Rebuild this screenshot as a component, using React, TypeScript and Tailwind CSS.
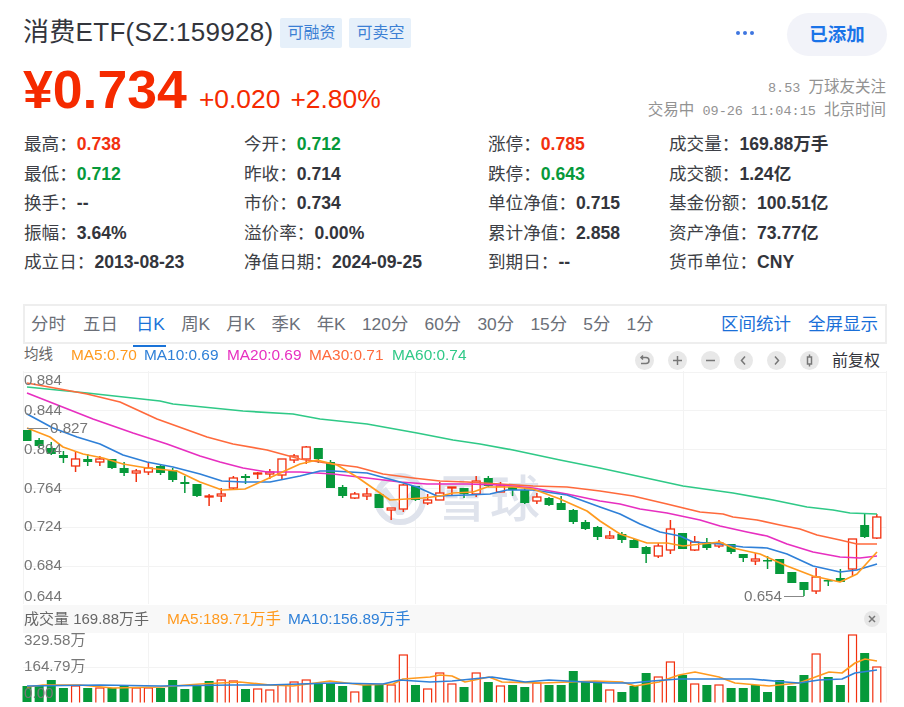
const RED = "#f2300f";
const GREEN = "#06993a";

type Candle = [number, number, number, number, "r" | "g"];

// body top, body bottom, wick top, wick bottom
const candles: Candle[] = [
  [431, 442, 431, 442, "g"], [441, 447, 439, 449, "g"], [449, 455, 443, 456, "g"], [456, 459, 452, 464, "g"],
  [460, 467, 452, 473, "r"], [460, 463, 455, 467, "g"], [460, 463, 457, 467, "r"], [460, 469, 460, 470, "g"],
  [469, 474, 463, 477, "g"], [472, 474, 470, 483, "r"], [469, 473, 463, 476, "r"], [467, 474, 465, 476, "g"],
  [471, 481, 469, 483, "g"], [483, 485, 477, 494, "g"], [485, 497, 485, 498, "g"], [497, 498, 495, 507, "r"],
  [495, 497, 489, 503, "r"], [479, 489, 477, 491, "r"], [477, 479, 475, 485, "g"], [474, 475, 473, 480, "r"],
  [473, 475, 470, 480, "r"], [460, 476, 460, 480, "r"], [457, 461, 455, 464, "r"], [448, 460, 447, 465, "r"],
  [449, 460, 449, 464, "g"], [463, 489, 461, 489, "g"], [488, 497, 486, 499, "g"], [495, 499, 493, 500, "r"],
  [495, 497, 489, 501, "r"], [495, 509, 495, 509, "g"], [509, 511, 509, 521, "r"], [486, 510, 485, 513, "r"],
  [487, 501, 487, 502, "g"], [501, 504, 495, 506, "r"], [494, 501, 483, 501, "r"], [488, 489, 488, 497, "r"],
  [489, 495, 489, 499, "g"], [482, 495, 477, 498, "r"], [479, 487, 477, 488, "g"], [487, 493, 483, 493, "r"],
  [488, 491, 487, 497, "g"], [491, 504, 489, 505, "g"], [498, 502, 494, 505, "r"], [499, 506, 498, 507, "g"],
  [504, 511, 497, 511, "g"], [511, 523, 510, 525, "g"], [523, 530, 521, 531, "g"], [528, 538, 527, 541, "g"],
  [537, 539, 532, 540, "r"], [535, 541, 533, 544, "g"], [541, 549, 540, 549, "g"], [548, 555, 547, 564, "g"],
  [547, 557, 544, 559, "r"], [530, 551, 521, 555, "r"], [534, 550, 534, 550, "g"], [543, 551, 537, 552, "r"],
  [543, 549, 539, 551, "g"], [544, 547, 541, 549, "r"], [545, 553, 545, 555, "g"], [555, 559, 555, 563, "g"],
  [560, 562, 554, 566, "r"], [561, 562, 557, 570, "g"], [560, 575, 560, 575, "g"], [573, 584, 573, 584, "g"],
  [583, 591, 583, 597, "g"], [578, 592, 569, 595, "r"], [581, 582, 580, 587, "g"], [579, 583, 570, 583, "g"],
  [540, 570, 540, 577, "r"], [526, 538, 515, 539, "g"], [518, 539, 515, 540, "r"],
];

const volumes: [number, "r" | "g"][] = [
  [686, "g"], [686, "g"], [680, "g"], [688, "g"], [686, "r"], [688, "g"], [688, "r"], [688, "g"], [685, "g"],
  [688, "r"], [688, "r"], [688, "g"], [680, "g"], [689, "g"], [686, "g"], [681, "g"], [680, "r"], [681, "r"],
  [689, "g"], [689, "r"], [690, "r"], [685, "r"], [682, "r"], [680, "r"], [683, "g"], [683, "g"], [686, "g"],
  [692, "r"], [685, "g"], [685, "g"], [685, "r"], [655, "r"], [685, "g"], [689, "r"], [673, "r"], [684, "r"],
  [687, "g"], [673, "r"], [682, "g"], [686, "r"], [685, "g"], [687, "g"], [683, "r"], [685, "g"], [685, "g"],
  [671, "g"], [681, "g"], [683, "g"], [690, "r"], [692, "g"], [686, "g"], [673, "g"], [677, "r"], [662, "r"],
  [675, "g"], [684, "r"], [685, "g"], [685, "r"], [688, "g"], [688, "g"], [685, "g"], [692, "g"], [680, "g"],
  [686, "g"], [675, "g"], [654, "r"], [677, "g"], [685, "g"], [635, "r"], [653, "g"], [667, "r"],
];

const ma60 = "27,388 87,394 160,402 173,405 243,412 293,415 320,420 367,425 417,434 453,441 480,445 513,451 560,461 600,469 683,487 733,494 773,501 807,508 833,511 850,514 877,515";
const ma30 = "27,384 60,390 87,395 120,403 157,420 207,438 233,445 267,451 300,460 333,465 357,468 383,475 413,479 440,482 467,483 500,485 533,487 567,488 600,492 633,497 667,505 700,513 723,515 733,518 757,521 780,526 800,530 817,536 840,541 857,545 877,545";
const ma20 = "27,394 60,407 93,420 133,434 167,445 200,457 220,463 243,469 267,473 300,473 333,475 367,479 400,483 427,485 467,485 500,486 533,489 567,495 600,502 620,505 640,510 667,514 700,521 720,527 747,533 767,537 787,545 813,553 840,558 860,559 877,557";
const ma10 = "27,415 53,429 77,438 100,445 123,456 147,463 173,468 200,475 222,482 243,483 270,483 300,477 320,472 333,472 367,474 400,483 417,488 437,497 467,496 490,495 507,491 533,491 567,496 600,508 620,515 640,525 660,533 680,537 693,543 720,545 743,548 767,549 787,555 813,567 840,573 857,571 877,565";
const ma5 = "27,429 50,438 63,448 83,455 103,459 123,465 147,469 177,472 200,483 222,491 245,490 267,480 300,465 317,461 337,466 357,478 390,501 423,499 440,497 453,494 473,493 487,488 513,488 533,490 560,500 587,512 600,522 620,535 647,544 667,544 683,547 720,543 733,549 760,555 787,567 813,577 840,583 857,575 877,553";

const volMa5 = "27,687 43,685 80,685 113,688 160,687 200,684 240,682 270,685 293,686 330,681 363,685 393,684 403,679 430,677 440,675 452,676 465,682 489,677 502,682 542,683 569,682 595,681 622,682 635,686 659,682 679,675 695,672 719,677 735,683 769,686 799,683 829,672 842,673 855,663 865,659 877,661";
const volMa10 = "27,686 100,685 160,686 233,685 267,685 333,683 383,684 400,680 430,682 452,681 492,677 525,682 549,680 585,682 609,683 632,683 652,681 679,679 752,679 785,682 799,683 819,680 842,679 855,673 877,670";

const candleX = (i: number) => 27 + i * 12.14;

const stats: [string, string, string?][][] = [
  [["最高：", "0.738", RED], ["今开：", "0.712", GREEN], ["涨停：", "0.785", RED], ["成交量：", "169.88万手"]],
  [["最低：", "0.712", GREEN], ["昨收：", "0.714"], ["跌停：", "0.643", GREEN], ["成交额：", "1.24亿"]],
  [["换手：", "--"], ["市价：", "0.734"], ["单位净值：", "0.715"], ["基金份额：", "100.51亿"]],
  [["振幅：", "3.64%"], ["溢价率：", "0.00%"], ["累计净值：", "2.858"], ["资产净值：", "73.77亿"]],
  [["成立日：", "2013-08-23"], ["净值日期：", "2024-09-25"], ["到期日：", "--"], ["货币单位：", "CNY"]],
];

const tabs = ["分时", "五日", "日K", "周K", "月K", "季K", "年K", "120分", "60分", "30分", "15分", "5分", "1分"];

const legend = [
  ["MA5:0.70", "text-[#ff9a1f]", "w-[73px]"],
  ["MA10:0.69", "text-[#2f80d8]", "w-[83px]"],
  ["MA20:0.69", "text-[#e72fc0]", "w-[82px]"],
  ["MA30:0.71", "text-[#ff6a3c]", "w-[83px]"],
  ["MA60:0.74", "text-[#2fc987]", "w-[83px]"],
];

function ToolIcon({ children }: { children: React.ReactNode }) {
  return (
    <span className="w-[19px] h-[19px] rounded-full bg-[#e8e8e8] flex items-center justify-center">
      <svg width="13" height="13" viewBox="0 0 13 13" fill="none" stroke="#777" strokeWidth="1.5">
        {children}
      </svg>
    </span>
  );
}

function App() {
  return (
    <div className="w-[904px] h-[707px] overflow-hidden bg-white pl-[23px] pr-[17px] pt-[13px] text-[#33353c] font-['Liberation_Sans','Noto_Sans_CJK_SC',sans-serif]">
      <div className="flex items-start h-[43px]">
        <div className="flex items-center h-[39px]">
          <h1 className="text-[26px] leading-[37px] font-normal tracking-[0.3px]">消费ETF(SZ:159928)</h1>
          <span className="ml-[7px] w-[62px] h-[30px] rounded-[2px] bg-[#e6f0fa] text-[#3b7fd4] text-[16px] leading-[30px] text-center">可融资</span>
          <span className="ml-[7px] w-[62px] h-[30px] rounded-[2px] bg-[#e6f0fa] text-[#3b7fd4] text-[16px] leading-[30px] text-center">可卖空</span>
        </div>
        <div className="ml-auto flex items-center h-[43px]">
          <span className="flex gap-[3px] mr-[33px] mb-[3px]">
            <i className="w-[4px] h-[4px] rounded-full bg-[#3f76e0]" />
            <i className="w-[4px] h-[4px] rounded-full bg-[#3f76e0]" />
            <i className="w-[4px] h-[4px] rounded-full bg-[#3f76e0]" />
          </span>
          <button className="w-[100px] h-[43px] rounded-full bg-[#f2f3f9] text-[#1a73e8] text-[18.5px] font-bold">已添加</button>
        </div>
      </div>

      <div className="flex items-start justify-between h-[74px]">
        <div className="flex items-baseline text-[#f52a00] -mt-[2px]">
          <span className="text-[53.6px] leading-[70px] font-bold">¥0.734</span>
          <span className="ml-[12px] text-[26.4px]">+0.020</span>
          <span className="ml-[10px] text-[26.4px]">+2.80%</span>
        </div>
        <div className="text-right text-[15.5px] leading-[22px] text-[#929292] mt-[21px] mr-[1px] font-['Liberation_Mono','Noto_Sans_CJK_SC',monospace]">
          <div><span className="text-[13.5px]">8.53 </span>万球友关注</div>
          <div>交易中<span className="text-[13.5px]"> 09-26 11:04:15 </span>北京时间</div>
        </div>
      </div>

      <div className="text-[17.6px]">
        {stats.map((row, r) => (
          <div key={r} className="grid grid-cols-[220px_244px_181px_218px] h-[29.6px] leading-[29.6px] pl-[1px]">
            {row.map(([label, value, color]) => (
              <div key={label} className="whitespace-nowrap">
                <span className="text-[#3d3f46]">{label}</span>
                <span className="font-bold" style={color ? { color } : undefined}>{value}</span>
              </div>
            ))}
          </div>
        ))}
      </div>

      <div className="mt-[26px] h-[40px] border-2 border-[#eeeeee] flex items-center pl-[6px] pr-[7px] pt-[1px] relative text-[17.4px] text-[#6b6f78]">
        <div className="flex gap-[16.2px]">
          {tabs.map((t) => (
            <span key={t} className={t === "日K" ? "text-[#1a73d8] relative" : t === "分时" ? "mr-[1px]" : t === "五日" ? "mr-[2px]" : ""}>
              {t}
              {t === "日K" && <i className="absolute left-[-3px] right-[-1px] bottom-[-9px] h-[2px] bg-[#1a73d8]" />}
            </span>
          ))}
        </div>
        <div className="ml-auto flex gap-[17px] text-[#1a6fd8] text-[17.5px]">
          <span>区间统计</span>
          <span>全屏显示</span>
        </div>
      </div>

      <div className="flex items-start h-[27px] pl-[1px] text-[15.4px] whitespace-nowrap">
        <div className="flex items-center h-[22px]">
          <span className="w-[47px] text-[14.5px] text-[#666]">均线</span>
          {legend.map(([text, color, width]) => (
            <span key={text} className={`${color} ${width} blur-[0.3px]`}>{text}</span>
          ))}
        </div>
        <div className="ml-auto flex items-center gap-[14px] mr-[7px] mt-[5px]">
          <ToolIcon><path d="M3 3.5h5a3 3 0 0 1 0 6H3M5 1.5 3 3.5l2 2" /></ToolIcon>
          <ToolIcon><path d="M6.5 2v9M2 6.5h9" /></ToolIcon>
          <ToolIcon><path d="M2 6.5h9" /></ToolIcon>
          <ToolIcon><path d="M8 2.5 4.5 6.5 8 10.5" /></ToolIcon>
          <ToolIcon><path d="M5 2.5 8.5 6.5 5 10.5" /></ToolIcon>
          <ToolIcon><path d="M4.5 3h4v7h-4zM6.5 0.5V3M6.5 10v2.500" /></ToolIcon>
          <span className="-ml-[1px] text-[16px] text-[#33353c]">前复权</span>
        </div>
      </div>

      <svg className="block blur-[0.4px]" width="864" height="233" viewBox="23 372 864 233">
        <g stroke="#f3f3f3" strokeWidth="1" fill="none">
          <path d="M23 373.500H887M23 411.500H887M23 450.500H887M23 489.500H887M23 528.500H887M23 567.500H887" />
          <path d="M23.500 372V605M148.500 372V605M415.500 372V605M683.500 372V605M886.500 372V605" />
        </g>
        <g fill="#dfe3ec" stroke="none">
          <circle cx="400" cy="500" r="23" fill="none" stroke="#dfe3ec" strokeWidth="6" />
          <path d="M386 488 400 506 414 488 420 492 403 516H397L380 492z" />
          <text x="437" y="518" fontSize="50" fontWeight="500" letterSpacing="3">雪球</text>
        </g>
        {candles.map(([top, bottom, wickTop, wickBottom, side], i) => {
          const x = candleX(i);
          const color = side === "r" ? RED : GREEN;
          return (
            <g key={i}>
              <path d={`M${x} ${wickTop}V${wickBottom}`} stroke={color} strokeWidth="1.5" />
              {side === "r" ? (
                <rect x={x - 4} y={top} width="8" height={bottom - top} fill="#fff" stroke={color} strokeWidth="1.3" />
              ) : (
                <rect x={x - 4.5} y={top} width="9" height={Math.max(bottom - top, 1.500)} fill={color} />
              )}
            </g>
          );
        })}
        <g fill="none" strokeWidth="1.7" strokeLinejoin="round">
          <polyline points={ma60} stroke="#2fc987" />
          <polyline points={ma30} stroke="#ff6a3c" />
          <polyline points={ma20} stroke="#e72fc0" />
          <polyline points={ma10} stroke="#2f80d8" />
          <polyline points={ma5} stroke="#ff9a1f" />
        </g>
        <path d="M27 429.500H48M784 597.500H804" stroke="#888" strokeWidth="1" fill="none" />
        <g fontSize="15.200" fill="#777">
          <text x="24" y="386">0.884</text>
          <text x="24" y="416">0.844</text>
          <text x="50" y="434">0.827</text>
          <text x="24" y="455">0.804</text>
          <text x="24" y="494">0.764</text>
          <text x="24" y="532">0.724</text>
          <text x="24" y="571">0.684</text>
          <text x="24" y="602">0.644</text>
          <text x="744" y="602">0.654</text>
        </g>
      </svg>

      <div className="h-[28px] mt-[1px] bg-[#f8f8f8] flex items-center pl-[1px] text-[15.4px] whitespace-nowrap">
        <span className="w-[143px] text-[15px] text-[#666] blur-[0.3px]">成交量 169.88万手</span>
        <span className="w-[121px] text-[#ff9a1f] blur-[0.3px]">MA5:189.71万手</span>
        <span className="text-[#2f80d8] blur-[0.3px]">MA10:156.89万手</span>
        <span className="ml-auto mr-[7px] w-[16px] h-[16px] rounded-full bg-[#e6e6e6] flex items-center justify-center">
          <svg width="8" height="8" viewBox="0 0 8 8" stroke="#777" strokeWidth="1.500"><path d="M1 1l6 6M7 1 1 7" /></svg>
        </span>
      </div>

      <svg className="block overflow-visible blur-[0.4px]" width="864" height="74" viewBox="23 633 864 74">
        <g stroke="#f3f3f3" strokeWidth="1" fill="none">
          <path d="M23 667.500H887M148.500 633V707M415.500 633V707M683.500 633V707M886.500 633V707" />
        </g>
        {volumes.map(([top, side], i) => {
          const x = candleX(i);
          return side === "r" ? (
            <rect key={i} x={x - 4} y={top} width="8" height={710 - top} fill="#fff" stroke={RED} strokeWidth="1.200" />
          ) : (
            <rect key={i} x={x - 4.5} y={top} width="9" height={702 - top} fill={GREEN} />
          );
        })}
        <rect x="23" y="702.500" width="864" height="5" fill="#fff" />
        <g fill="none" strokeWidth="1.700" strokeLinejoin="round">
          <polyline points={volMa5} stroke="#ff9a1f" />
          <polyline points={volMa10} stroke="#2f80d8" />
        </g>
        <g fontSize="15.200" fill="#777">
          <text x="24" y="645">329.58万</text>
          <text x="24" y="671">164.79万</text>
          <text x="24" y="698">0.00</text>
        </g>
      </svg>
    </div>
  );
}

export default App;
